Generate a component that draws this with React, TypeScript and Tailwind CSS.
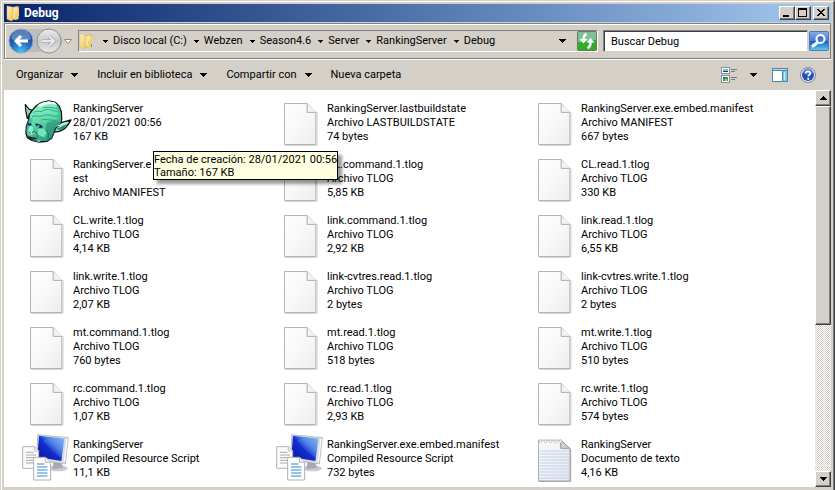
import { useState } from "react";
import clsx from "clsx";

type IconKind = "goblin" | "blank" | "resource" | "text";

type FileItem = {
  icon: IconKind;
  lines: string[];
  tooltip?: string[];
};

const PATH = ["Disco local (C:)", "Webzen", "Season4.6", "Server", "RankingServer", "Debug"];

const FILES: FileItem[] = [
  {
    icon: "goblin",
    lines: ["RankingServer", "28/01/2021 00:56", "167 KB"],
    tooltip: ["Fecha de creación: 28/01/2021 00:56", "Tamaño: 167 KB"]
  },
  { icon: "blank", lines: ["RankingServer.lastbuildstate", "Archivo LASTBUILDSTATE", "74 bytes"] },
  { icon: "blank", lines: ["RankingServer.exe.embed.manifest", "Archivo MANIFEST", "667 bytes"] },
  { icon: "blank", lines: ["RankingServer.e", "est", "Archivo MANIFEST"] },
  { icon: "blank", lines: ["CL.command.1.tlog", "Archivo TLOG", "5,85 KB"] },
  { icon: "blank", lines: ["CL.read.1.tlog", "Archivo TLOG", "330 KB"] },
  { icon: "blank", lines: ["CL.write.1.tlog", "Archivo TLOG", "4,14 KB"] },
  { icon: "blank", lines: ["link.command.1.tlog", "Archivo TLOG", "2,92 KB"] },
  { icon: "blank", lines: ["link.read.1.tlog", "Archivo TLOG", "6,55 KB"] },
  { icon: "blank", lines: ["link.write.1.tlog", "Archivo TLOG", "2,07 KB"] },
  { icon: "blank", lines: ["link-cvtres.read.1.tlog", "Archivo TLOG", "2 bytes"] },
  { icon: "blank", lines: ["link-cvtres.write.1.tlog", "Archivo TLOG", "2 bytes"] },
  { icon: "blank", lines: ["mt.command.1.tlog", "Archivo TLOG", "760 bytes"] },
  { icon: "blank", lines: ["mt.read.1.tlog", "Archivo TLOG", "518 bytes"] },
  { icon: "blank", lines: ["mt.write.1.tlog", "Archivo TLOG", "510 bytes"] },
  { icon: "blank", lines: ["rc.command.1.tlog", "Archivo TLOG", "1,07 KB"] },
  { icon: "blank", lines: ["rc.read.1.tlog", "Archivo TLOG", "2,93 KB"] },
  { icon: "blank", lines: ["rc.write.1.tlog", "Archivo TLOG", "574 bytes"] },
  { icon: "resource", lines: ["RankingServer", "Compiled Resource Script", "11,1 KB"] },
  { icon: "resource", lines: ["RankingServer.exe.embed.manifest", "Compiled Resource Script", "732 bytes"] },
  { icon: "text", lines: ["RankingServer", "Documento de texto", "4,16 KB"] }
];

const RAISED =
  "border border-t-white border-l-white border-r-[#404040] border-b-[#404040] bg-[#d4d0c8] shadow-[inset_-1px_-1px_0_#808080]";

function Caret({ small }: { small?: boolean }) {
  return small ? (
    <svg width="5" height="3" viewBox="0 0 5 3" shapeRendering="crispEdges" className="shrink-0">
      <path d="M0 0h5v1H0zM1 1h3v1H1zM2 2h1v1H2z" />
    </svg>
  ) : (
    <svg width="7" height="4" viewBox="0 0 7 4" shapeRendering="crispEdges" className="shrink-0">
      <path d="M0 0h7v1H0zM1 1h5v1H1zM2 2h3v1H2zM3 3h1v1H3z" />
    </svg>
  );
}

function FolderIcon() {
  return (
    <svg width="16" height="16" viewBox="0 0 16 16" className="shrink-0">
      <defs>
        <linearGradient id="folderFront" x1="0" y1="0" x2="1" y2="1">
          <stop offset="0" stopColor="#fff6c4" />
          <stop offset="1" stopColor="#e9bd54" />
        </linearGradient>
      </defs>
      <path d="M6 2l6-1 1 1v12l-7 1z" fill="#e2b94f" />
      <path d="M7 3l4-1v10l-4 2z" fill="#f7e4a0" />
      <path d="M11 3h2v9h-2z" fill="#f3d37a" />
      <path d="M1 1l5 1 1 2v11l-2 1-4-2z" fill="url(#folderFront)" stroke="#e3bd5c" strokeWidth=".5" />
      <path d="M9 8l3-1v7l-3 1z" fill="#f4cf6a" />
      <path d="M12 11h1v3h-1z" fill="#4aa0d8" />
    </svg>
  );
}

function GoblinIcon() {
  return (
    <svg width="48" height="48" viewBox="6 0 144 144">
      <defs>
        <linearGradient id="skin" x1=".35" y1="0" x2=".6" y2="1">
          <stop offset="0" stopColor="#a4f8d0" />
          <stop offset=".45" stopColor="#5fdcab" />
          <stop offset="1" stopColor="#2c9a80" />
        </linearGradient>
        <clipPath id="head">
          <path d="M30 38L42 24l16-10 22-5 20 4 12 12 6 17 1 22-4 14-14 12-6 16-6 14-14 10-24 2-22-5-13-8-4-12 1-22 6-16 3-20z" />
        </clipPath>
      </defs>
      <path
        d="M10 20l10 13 10 4-6 14-8 10-4-20zM94 88l24-14 29-8-7 12-12 14-16 8-19 3z"
        fill="#7fe0bb"
        stroke="#04100f"
        strokeWidth="4"
        strokeLinejoin="round"
      />
      <path
        d="M30 38L42 24l16-10 22-5 20 4 12 12 6 17 1 22-4 14-14 12-6 16-6 14-14 10-24 2-22-5-13-8-4-12 1-22 6-16 3-20z"
        fill="url(#skin)"
        stroke="#04100f"
        strokeWidth="4"
      />
      <g clipPath="url(#head)">
        <path d="M46 22l14-9 20-4 18 4 9 9-16-4-18 1-18 7z" fill="#f2fff8" />
        <path
          d="M34 44c10-8 20 0 30-6s20-4 30 0 16 0 22-4M30 56c12-6 20 2 32-3s22-2 32 1 18-2 24-2M58 66c10-4 18 0 26 0s20 4 34-2M62 30c12-4 24-2 34 0s10 0 16 0"
          fill="none"
          stroke="#2da884"
          strokeWidth="3"
        />
        <path d="M100 16l12 16 6 20v24l-10 6-2-20 2-20z" fill="#3cba90" opacity=".7" />
        <path d="M74 74l20-6 22 4-14 18-8 26-10 12-14 6 6-20-6-20z" fill="#2a9078" opacity=".65" />
        <path d="M10 72l14-14 8 6-4 18-6 14-12 6z" fill="#3f9daa" opacity=".6" />
        <path d="M17 74l12 4-3 8-7-4zM40 76l16 4 8 8-10 2-12-6z" fill="#082a3c" />
        <path d="M46 82h6v4h-6z" fill="#a0d8ff" />
        <path d="M24 82l8 6 4 18-10 6-8-8 2-14z" fill="#91f0cb" />
        <path d="M20 102l6 4M30 104l6-4" stroke="#0c4a49" strokeWidth="3" />
        <path d="M48 94l18-2 8 12-8 14-18-8z" fill="#83edc2" opacity=".8" />
        <path d="M18 114l12 4 16 1-4 5-12 1-12-5z" fill="#3a1c2c" />
        <path d="M24 126l18 3 14-3-2 7-18 2-12-5z" fill="#71cddb" />
        <path d="M36 98l8 8 4 12M72 96l8 10-2 14" fill="none" stroke="#1c7765" strokeWidth="3" />
      </g>
      <path d="M12 26l8 9 5 4-5 8-4 5z" fill="#a3c8c0" />
      <path d="M100 86l18-9 22-7-8 6-18 7z" fill="#f0fff8" />
      <path d="M102 92l14-4 18-10-8 12-14 6z" fill="#268a74" />
    </svg>
  );
}

function BlankIcon() {
  return (
    <svg width="48" height="48" viewBox="36 24 144 144">
      <defs>
        <linearGradient id="paper" x1="0" y1="0" x2="1" y2="1">
          <stop offset="0" stopColor="#ffffff" />
          <stop offset=".5" stopColor="#f8f8f8" />
          <stop offset="1" stopColor="#ededed" />
        </linearGradient>
      </defs>
      <path d="M57 166h96V66" fill="none" stroke="#cfcfcf" strokeWidth="3" />
      <path d="M55.500 40.500h68l26 27v96h-94z" fill="url(#paper)" stroke="#b4b4b4" strokeWidth="3" />
      <path d="M123.500 41v26h26" fill="#f4f4f4" stroke="#aaa" strokeWidth="3" />
    </svg>
  );
}

function ResourceIcon() {
  return (
    <svg width="48" height="48" viewBox="72 42 144 144" className="overflow-visible">
      <defs>
        <linearGradient id="screen" x1="0" y1="1" x2="1" y2="0">
          <stop offset="0" stopColor="#0812a0" />
          <stop offset=".5" stopColor="#1230cf" />
          <stop offset=".65" stopColor="#4a80e8" />
          <stop offset="1" stopColor="#9cc8fa" />
        </linearGradient>
      </defs>
      <ellipse cx="174" cy="145" rx="30" ry="9" fill="#c9ccd0" />
      <path d="M160 126l24 2 6 16-32 4z" fill="#a6abb2" />
      <path d="M113 44l92 9-9 79-86-13z" fill="#d9dde2" stroke="#a0a6ad" strokeWidth="2" />
      <path d="M117 47l76 9-9 67-72-12z" fill="url(#screen)" />
      <path d="M128 62l26-12 38 5-7 60-24-18z" fill="#6a9cf0" opacity=".25" />
      <path d="M199 56l4 1-8 70-4-1z" fill="#fafafa" />
      <path d="M68 80h36l12 12v53H68z" fill="#fbfbfb" stroke="#b5b5b5" strokeWidth="3" />
      <path d="M103 80v13h13" fill="#eee" stroke="#aaa" strokeWidth="2" />
      <path d="M78 97h22M78 105h30M78 113h30M78 121h30M78 129h30" stroke="#a9a9a9" strokeWidth="3" />
      <path d="M101 112h36l15 15v53h-51z" fill="#fff" stroke="#b0b0b0" strokeWidth="3" />
      <path d="M136 112v15h15" fill="#eee" stroke="#999" strokeWidth="2" />
      <path d="M111 132h22M111 141h31M111 150h31M111 159h31M111 168h31" stroke="#2f86c8" strokeWidth="3" />
    </svg>
  );
}

function TextIcon() {
  return (
    <svg width="48" height="48" viewBox="36 42 144 144">
      <defs>
        <linearGradient id="note" x1="0" y1="0" x2="1" y2="1">
          <stop offset="0" stopColor="#fafafa" />
          <stop offset="1" stopColor="#e3e8f3" />
        </linearGradient>
      </defs>
      <path d="M56 184h96V86" fill="none" stroke="#9b9b9b" strokeWidth="3" />
      <path d="M55.500 60.500h68l26 25v97h-94z" fill="url(#note)" stroke="#b0b0b0" strokeWidth="3" />
      <path
        d="M58 93h90M58 102h90M58 111h90M58 120h90M58 129h90M58 138h90M58 147h90M58 156h90M58 165h90M58 174h90"
        stroke="#c3d0e6"
        strokeWidth="3"
      />
      <path d="M122 60v25h27z" fill="#d0d0d0" stroke="#999" strokeWidth="3" />
      {[62, 77, 92, 107, 122].map((x) => (
        <circle key={x} cx={x} cy="64" r="4" fill="#fff" stroke="#aaa" strokeWidth="2" />
      ))}
    </svg>
  );
}

const ICONS = { goblin: GoblinIcon, blank: BlankIcon, resource: ResourceIcon, text: TextIcon };

function TitleBar() {
  return (
    <header className="flex h-[18px] shrink-0 items-center bg-linear-to-r from-[#0a246a] to-[#a6caf0] px-[2px]">
      <FolderIcon />
      <h1 className="ml-[2px] flex-1 text-[12px] leading-[14px] font-bold text-white">Debug</h1>
      <button type="button" aria-label="Minimizar" className={clsx(RAISED, "h-[14px] w-4")}>
        <svg width="14" height="12" shapeRendering="crispEdges">
          <path d="M3 8h6v2H3z" />
        </svg>
      </button>
      <button type="button" aria-label="Maximizar" className={clsx(RAISED, "h-[14px] w-4")}>
        <svg width="14" height="12" shapeRendering="crispEdges">
          <path d="M2 1h9v9H2zM3 3v6h7V3z" fillRule="evenodd" />
        </svg>
      </button>
      <button type="button" aria-label="Cerrar" className={clsx(RAISED, "ml-[2px] h-[14px] w-4")}>
        <svg width="14" height="12" shapeRendering="crispEdges">
          <path d="M3 2h2v1h1v1h2V3h1V2h2v1h-1v1H9v1H8v1h1v1h1v1h1v1H9V8H8V7H6v1H5v1H3V8h1V7h1V6h1V5H5V4H4V3H3z" />
        </svg>
      </button>
    </header>
  );
}

function HistoryButtons() {
  return (
    <div className="relative flex shrink-0 items-center">
      <svg width="64" height="28" viewBox="0 0 64 28" className="absolute">
        <defs>
          <radialGradient id="back" cx=".5" cy=".95" r=".9">
            <stop offset="0" stopColor="#48c4f8" />
            <stop offset=".5" stopColor="#2268bd" />
            <stop offset="1" stopColor="#173f88" />
          </radialGradient>
          <linearGradient id="forward" x1="0" y1="0" x2="0" y2="1">
            <stop offset="0" stopColor="#ececec" />
            <stop offset=".5" stopColor="#cacaca" />
            <stop offset="1" stopColor="#e6e6e6" />
          </linearGradient>
        </defs>
        <path d="M13 2h28c8 0 12 6 14 12-2 7-7 11-14 11H13z" fill="#bcbdbf" />
        <circle cx="13" cy="14" r="12" fill="url(#back)" stroke="#8fa3c4" />
        <path d="M3 12a10 10 0 0 1 20 0c-6 2-14 2-20 0z" fill="#a8c4ea" opacity=".45" />
        <path d="M13 9l-5 5 5 5M8 14h12" fill="none" stroke="#fff" strokeWidth="3" />
        <circle cx="41" cy="14" r="12" fill="url(#forward)" stroke="#8f8f8f" />
        <path d="M41 9l5 5-5 5M46 14H34" fill="none" stroke="#b4b4b4" strokeWidth="4" />
        <path d="M41 9l5 5-5 5M46 14H34" fill="none" stroke="#e8e8e8" strokeWidth="2" />
        <path d="M56.500 12.500h7l-3.500 4z" fill="#fff" stroke="#8a8a8a" />
      </svg>
      <button type="button" aria-label="Atrás" className="relative size-7 rounded-full" />
      <button type="button" aria-label="Adelante" className="relative size-7 rounded-full" />
      <button type="button" aria-label="Páginas recientes" className="relative h-4 w-2" />
    </div>
  );
}

function NavBar() {
  const [query, setQuery] = useState("Buscar Debug");

  return (
    <div className="mt-px flex h-9 shrink-0 items-center border border-[#808080] pl-[3px] shadow-[inset_1px_1px_0_#fff,0_1px_0_#fff]">
      <HistoryButtons />
      <nav
        aria-label="Ruta"
        className="ml-[6px] flex h-[22px] min-w-0 flex-1 items-center border border-t-[#808080] border-r-white border-b-white border-l-[#808080]"
      >
        <FolderIcon />
        <ol className="ml-px flex flex-1 items-center whitespace-nowrap">
          {PATH.map((name) => (
            <li key={name} className="flex items-center">
              <span className="ml-[7px] w-[10px]">
                <Caret small />
              </span>
              <a href="#">{name}</a>
            </li>
          ))}
        </ol>
        <button type="button" aria-label="Ubicaciones anteriores" className="mr-[11px] flex h-4 items-center">
          <Caret />
        </button>
        <button type="button" aria-label="Actualizar" className="shrink-0">
          <svg width="20" height="20" viewBox="0 0 20 20">
            <rect x=".5" y=".5" width="19" height="19" rx="1" fill="#3f9e55" stroke="#66796b" />
            <path d="M1 10h18v9H1z" fill="#2fae22" />
            <path d="M1 1h18v8c-6-1-12 3-18 2z" fill="#80bf93" />
            <path d="M9.500 3C7 4 6.500 6 6.500 9" fill="none" stroke="#fff" strokeWidth="2.500" />
            <path d="M2.500 8l4 4.500 4-4.500z" fill="#fff" />
            <path d="M10.500 17c2.500-1 3-3 3-6" fill="none" stroke="#fff" strokeWidth="2.500" />
            <path d="M9.500 11.500l4-4.500 4 4.500z" fill="#fff" />
          </svg>
        </button>
      </nav>
      <div className="ml-[5px] flex h-[22px] w-[227px] items-center">
        <input
          type="text"
          aria-label="Buscar"
          value={query}
          onChange={(event) => setQuery(event.target.value)}
          className="h-[22px] min-w-0 flex-1 border border-t-[#808080] border-r-[#d4d0c8] border-b-[#d4d0c8] border-l-[#808080] bg-white pl-[7px] shadow-[inset_1px_1px_0_#404040] outline-none"
        />
        <button type="button" aria-label="Iniciar búsqueda" className="mr-px ml-px shrink-0">
          <svg width="20" height="20" viewBox="0 0 20 20">
            <defs>
              <linearGradient id="search" x1="0" y1="0" x2="0" y2="1">
                <stop offset="0" stopColor="#86aee8" />
                <stop offset=".48" stopColor="#4a7fd6" />
                <stop offset=".5" stopColor="#1459c4" />
                <stop offset="1" stopColor="#5cd0f8" />
              </linearGradient>
            </defs>
            <rect x=".5" y=".5" width="19" height="19" rx="1" fill="url(#search)" stroke="#5577a8" />
            <path d="M8.500 11.500L4 15" stroke="#fff" strokeWidth="3" strokeLinecap="round" />
            <circle cx="11.500" cy="8" r="4" fill="#3b78d8" stroke="#fff" strokeWidth="2" />
          </svg>
        </button>
      </div>
    </div>
  );
}

function CommandBar() {
  return (
    <div className="mt-px flex h-[30px] shrink-0 items-center pr-[15px] pl-3 whitespace-nowrap">
      <div className="flex flex-1 items-center gap-[19px]">
        {["Organizar", "Incluir en biblioteca", "Compartir con"].map((label) => (
          <button key={label} type="button" className="flex items-center gap-2">
            {label}
            <Caret />
          </button>
        ))}
        <button type="button">Nueva carpeta</button>
      </div>
      <button type="button" aria-label="Cambiar la vista" className="flex items-center gap-[13px]">
        <svg width="16" height="16" viewBox="0 0 16 16" shapeRendering="crispEdges">
          <path d="M0 0h9v7H0zM0 8h9v8H0z" fill="#8395a3" />
          <path d="M1 1h7v5H1zM1 9h7v6H1z" fill="#fff" />
          <path d="M2 2h5v3H2z" fill="#79bde6" />
          <path d="M2 4h5v1H2z" fill="#173f62" />
          <path d="M2 10h5v4H2z" fill="#3f9a3f" />
          <path d="M2 10h2v2H2z" fill="#2867c0" />
          <path d="M4 12h2v2H4z" fill="#e5bf3c" />
          <path d="M10 2h6v1h-6zM10 4h4v1h-4zM10 10h6v1h-6zM10 12h4v1h-4z" fill="#77797b" />
        </svg>
        <Caret />
      </button>
      <button type="button" aria-label="Panel de vista previa" className="ml-[15px]">
        <svg width="16" height="14" viewBox="0 0 16 14" shapeRendering="crispEdges">
          <path d="M0 0h16v14H0z" fill="#4d87ab" />
          <path d="M1 3h9v10H1z" fill="#fff" />
          <path d="M1 1h14v1H1z" fill="#b6dcec" />
          <path d="M11 3h4v10h-4z" fill="#80c6e2" />
          <path d="M12 4h1v8h-1z" fill="#c5edf8" />
        </svg>
      </button>
      <button type="button" aria-label="Ayuda" className="ml-3">
        <svg width="16" height="16" viewBox="0 0 16 16">
          <circle cx="8" cy="8" r="7.500" fill="#eef1f6" stroke="#7d8796" />
          <circle cx="8" cy="8" r="6" fill="#2450b0" />
          <path d="M3 6a5 5 0 0 1 10 0c-3 2-7 2-10 0z" fill="#7398dd" opacity=".6" />
          <path d="M5.800 6.300C6 3.700 10.300 3.800 10.300 6.200 10.300 7.800 8.200 7.800 8.200 9.600" fill="none" stroke="#fff" strokeWidth="1.700" />
          <circle cx="8.200" cy="11.800" r="1.100" fill="#fff" />
        </svg>
      </button>
    </div>
  );
}

function FileTile({ file }: { file: FileItem }) {
  const Icon = ICONS[file.icon];

  return (
    <li className="relative flex h-12">
      <span className="w-[49px] shrink-0">
        <Icon />
      </span>
      <div className="pt-1 leading-[14px] whitespace-nowrap">
        {file.lines.map((line) => (
          <p key={line}>{line}</p>
        ))}
      </div>
      {file.tooltip ? (
        <div
          role="tooltip"
          className="absolute top-[53px] left-[129px] z-10 h-[29px] border border-black bg-[#ffffe1] pt-px leading-[13px] whitespace-nowrap shadow-[4px_4px_3px_rgba(0,0,0,0.4)]"
        >
          {file.tooltip.map((line) => (
            <p key={line}>{line}</p>
          ))}
        </div>
      ) : null}
    </li>
  );
}

function ScrollBar() {
  return (
    <div className="flex w-4 shrink-0 flex-col bg-[repeating-conic-gradient(#d4d0c8_0_25%,#fff_0_50%)] bg-[length:2px_2px]">
      <button type="button" aria-label="Subir" className={clsx(RAISED, "flex h-4 items-center justify-center")}>
        <span className="rotate-180">
          <Caret />
        </span>
      </button>
      <div className={clsx(RAISED, "h-[219px]")} />
      <button type="button" aria-label="Bajar" className={clsx(RAISED, "mt-auto flex h-4 items-center justify-center")}>
        <Caret />
      </button>
    </div>
  );
}

export default function App() {
  return (
    <div className="h-screen overflow-hidden border-t border-r border-l border-t-[#d4d0c8] border-r-[#404040] border-l-[#d4d0c8] bg-[#d4d0c8] font-['Roboto',sans-serif] text-[11px] leading-[14px] text-black">
      <div className="flex h-full flex-col border-t border-r border-l border-t-white border-r-[#808080] border-l-white px-[2px] pt-[2px] pb-[3px]">
        <TitleBar />
        <NavBar />
        <CommandBar />
        <main className="flex min-h-0 flex-1 bg-white">
          <ul className="grid min-w-0 flex-1 grid-cols-[repeat(auto-fill,254px)] content-start gap-y-2 overflow-hidden pt-2 pl-5">
            {FILES.map((file, index) => (
              <FileTile key={index} file={file} />
            ))}
          </ul>
          <ScrollBar />
        </main>
      </div>
    </div>
  );
}
